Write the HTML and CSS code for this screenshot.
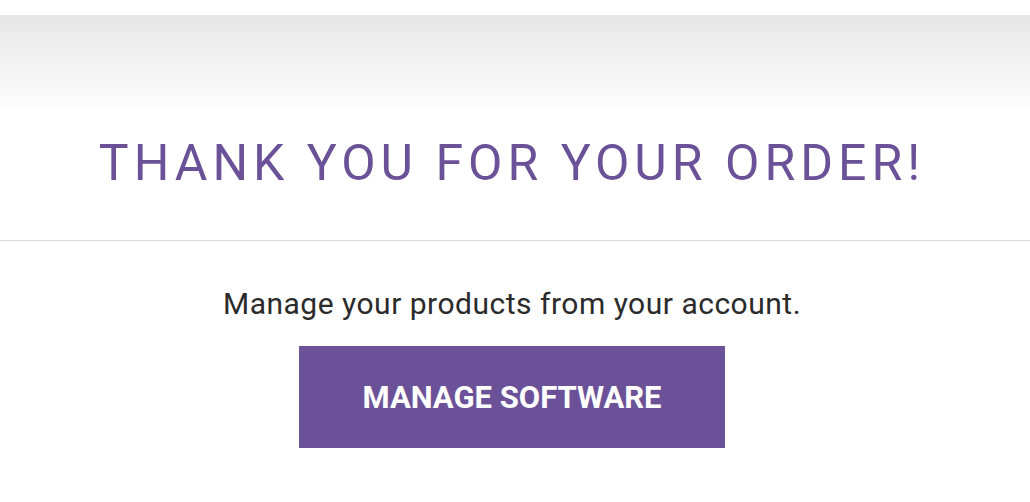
FILE: index.html
```html
<!DOCTYPE html>
<html lang="en">
<head>
    <meta charset="UTF-8">
    <meta name="viewport" content="width=device-width, initial-scale=1.0">
    <title>Thank you for your order</title>
    <link rel="stylesheet" href="styles.css">
</head>
<body>
    <div class="top-shade"></div>

    <header class="thanks-header">
        <h1>THANK YOU FOR YOUR ORDER!</h1>
    </header>

    <main class="thanks-body">
        <p class="thanks-text">Manage your products from your account.</p>
        <a href="#" class="manage-button">MANAGE SOFTWARE</a>
    </main>
</body>
</html>
```

FILE: styles.css
```css
body {
    margin: 0;
    padding: 0;
    font-family: Roboto, "Liberation Sans", sans-serif;
    background: #fff;
    color: #333;
}
.top-shade {
    margin-top: 15px;
    height: 95px;
    background: linear-gradient(to bottom, #e6e6e6, #fefefe);
}
.thanks-header {
    height: 130px;
    padding-right: 6px;
    border-bottom: 1px solid #d9d9d9;
    display: flex;
    align-items: flex-start;
    justify-content: center;
}
.thanks-header h1 {
    margin: 24px 0 0;
    font-size: 50px;
    font-weight: 400;
    letter-spacing: 5px;
    color: #6b5198;
}
.thanks-body {
    padding-right: 6px;
    display: flex;
    flex-direction: column;
    align-items: center;
}
.thanks-text {
    margin: 45px 0 25px;
    font-size: 30px;
    letter-spacing: 0.5px;
    color: #2b2b2b;
}
.manage-button {
    display: flex;
    align-items: center;
    justify-content: center;
    width: 426px;
    height: 102px;
    background-color: #6b5198;
    color: #fff;
    font-size: 31px;
    font-weight: 700;
    text-decoration: none;
}
```
